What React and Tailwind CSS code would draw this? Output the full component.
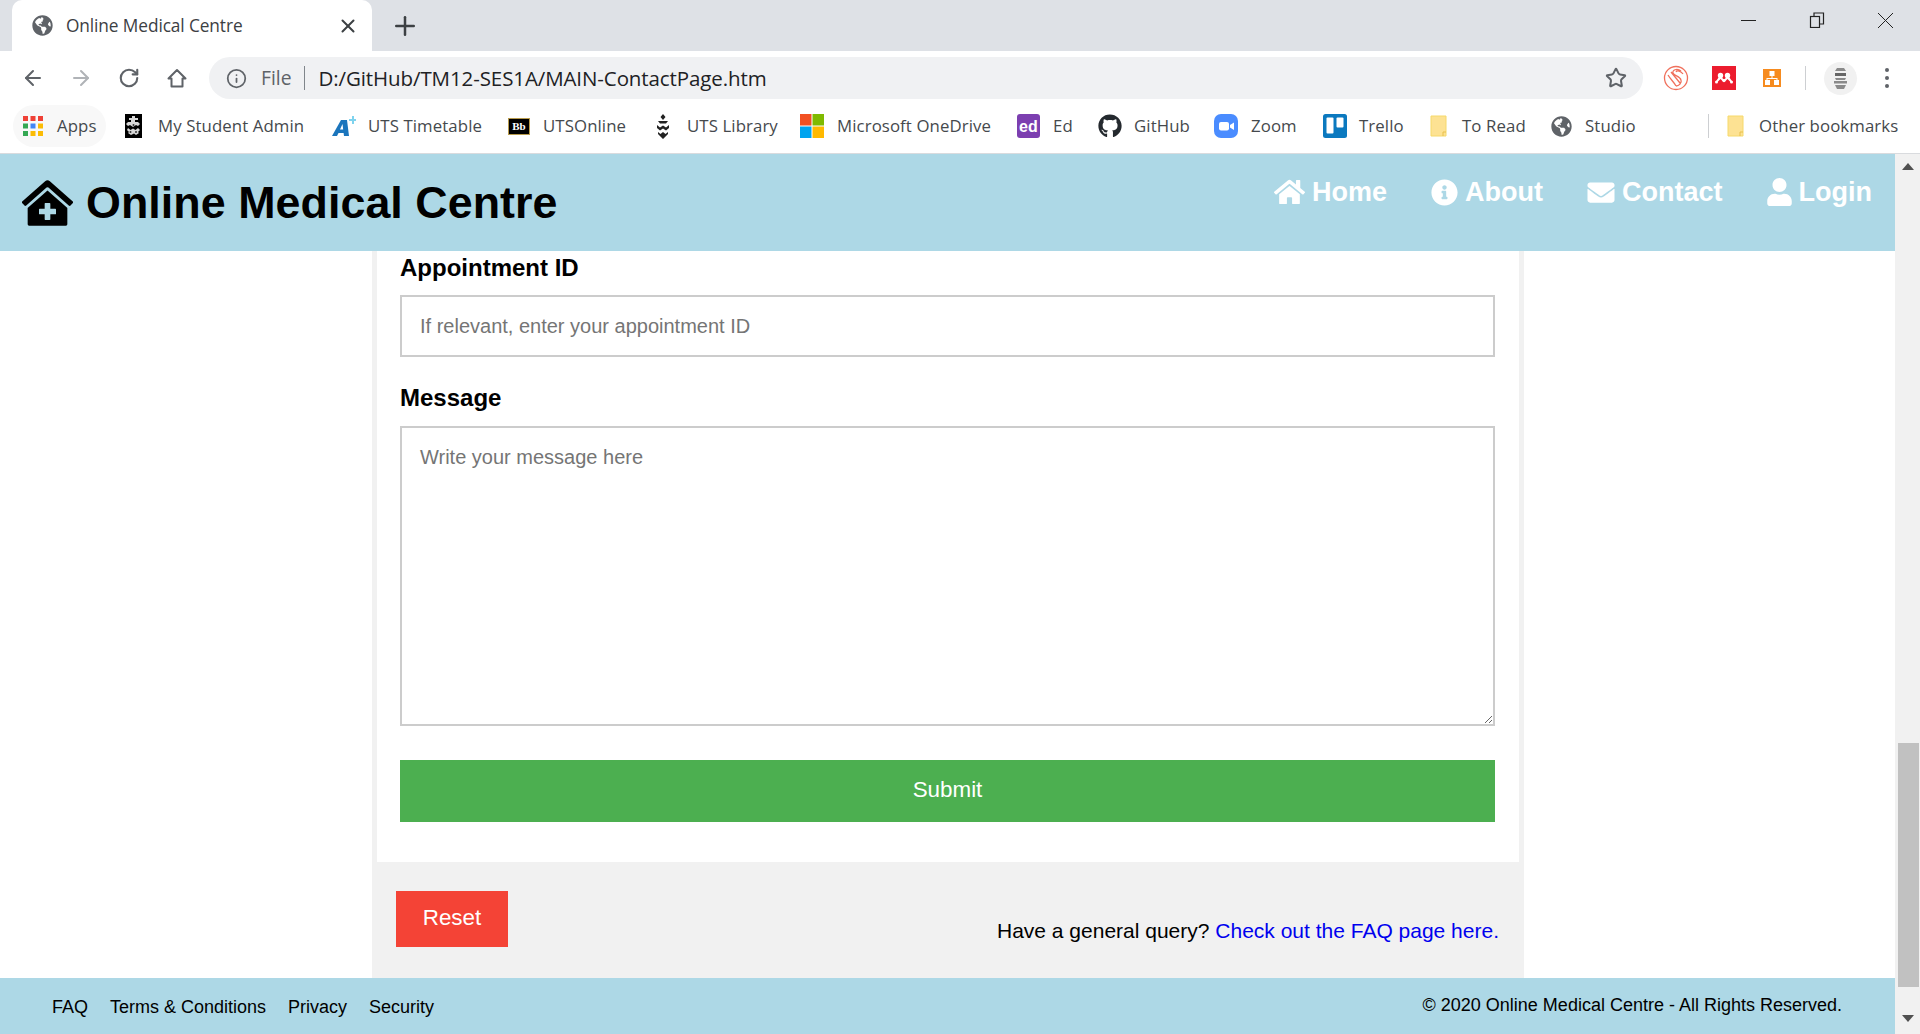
import React from "react";
import { FaHome, FaInfoCircle, FaEnvelope, FaUser, FaClinicMedical, FaGithub, FaGlobeAmericas } from "react-icons/fa";
import { ArrowLeft, ArrowRight, RotateCw, Info, Star, Plus, X } from "lucide-react";

const Folder = () => (
  <svg width="17" height="22" viewBox="0 0 17 22"><path d="M1 1h10l5 0v20H1z" fill="#fde293" stroke="#f6d96b" /><path d="M13 21v-4h3" fill="none" stroke="#e8c04c" /></svg>
);
const AppsIcon = () => (
  <svg width="20" height="20" viewBox="0 0 20 20">
    {[["#ef4136", 0, 0], ["#ef4136", 7.5, 0], ["#ef4136", 15, 0], ["#34a853", 0, 7.5], ["#4285f4", 7.5, 7.5], ["#fbbc05", 15, 7.5], ["#34a853", 0, 15], ["#fbbc05", 7.5, 15], ["#fbbc05", 15, 15]].map(([c, x, y], i) => (
      <rect key={i} x={x} y={y} width="5" height="5" fill={c} />
    ))}
  </svg>
);
const Crest = () => (
  <svg width="17" height="24" viewBox="0 0 17 24">
    <rect width="17" height="24" fill="#000" />
    <g fill="#d8d8d8">
      <path d="M7 2h3v2h3v2h-3v2h3l2 2-2 2-2-1-3 2-3-2-2 1-2-2 2-2h3V6H4V4h3z" />
      <path d="M3 14l2.500 2L8 14.500 10.500 16l2.500-2 2 2-2 2 1 1-3 2-2-1.500L6 21l-3-2 1-1-2-2z" />
    </g>
    <g fill="#333"><circle cx="5.500" cy="18" r="1" /><circle cx="11" cy="18" r="1" /><circle cx="8.500" cy="11" r="1" /></g>
  </svg>
);
const CrestLight = () => (
  <svg width="14" height="25" viewBox="0 0 14 25" fill="#222">
    <path d="M7 0l2.500 3L7 6 4.500 3zM2 7h10l-2 2.500h-6zM1 11l3 2.500 3-2 3 2 3-2.500v3l-3 2.500-3-2-3 2-3-2.500zM2 18l2.500 2 2.500-2 2.500 2 2.500-2v2l-5 5-5-5z" />
  </svg>
);
const APlus = () => (
  <svg width="24" height="22" viewBox="0 0 24 22">
    <path d="M0 21L9 5h6l2 16h-5l-.4-3H6.500L5 21zM8 14.500h3.200L10.500 9z" fill="#1b75bc" />
    <path d="M17 4h3V1h2v3h2v2h-2v3h-2V6h-3z" fill="#7fd3ee" />
  </svg>
);
const Bb = () => (
  <div className="w-[22px] h-[17px] bg-black border border-[#b89b4c] text-white text-[11px] leading-[15px] text-center font-['Liberation_Serif',serif] font-bold">Bb</div>
);
const MS = () => (
  <svg width="24" height="24" viewBox="0 0 24 24">
    <rect width="11.500" height="11.500" fill="#f25022" /><rect x="12.500" width="11.500" height="11.500" fill="#7fba00" />
    <rect y="12.500" width="11.500" height="11.500" fill="#00a4ef" /><rect x="12.500" y="12.500" width="11.500" height="11.500" fill="#ffb900" />
  </svg>
);
const Ed = () => (
  <div className="w-[23px] h-[24px] rounded-[3px] bg-[#7c3fb0] text-white text-[16px] leading-[25px] font-bold text-center font-['Liberation_Sans',sans-serif]">ed</div>
);
const Zoom = () => (
  <svg width="24" height="24" viewBox="0 0 24 24">
    <rect width="24" height="24" rx="7" fill="#4a8cff" />
    <rect x="5" y="8" width="10" height="8.500" rx="2" fill="#fff" />
    <path d="M16 11l4-2.500v7.500l-4-2.500z" fill="#fff" />
  </svg>
);
const Trello = () => (
  <svg width="24" height="24" viewBox="0 0 24 24">
    <rect width="24" height="24" rx="2.500" fill="#0b79bf" />
    <rect x="3.500" y="3.500" width="7" height="16" rx="1" fill="#fff" />
    <rect x="13.500" y="3.500" width="7" height="10" rx="1" fill="#fff" />
  </svg>
);
const Ext1 = () => (
  <svg width="26" height="26" viewBox="0 0 26 26" fill="none" stroke="#f0705c" strokeWidth="1.300">
    <circle cx="13" cy="13" r="11.500" />
    <path d="M18 6c-4-3-9-1-8 2 1 3 7 3 8 7 1 3-2 6-5 6M20 9c-2-3-6-4-7-2M5 10c3 5 6 7 8 11M8 7l9 11" />
  </svg>
);
const Mendeley = () => (
  <svg width="24" height="24" viewBox="0 0 24 24">
    <rect width="24" height="24" fill="#ec1c2e" />
    <g fill="#fff"><circle cx="8.500" cy="9.500" r="2.700" /><circle cx="15.500" cy="9.500" r="2.700" /><circle cx="12" cy="14.500" r="1.700" /><circle cx="4.500" cy="16" r="1.500" /><circle cx="19.500" cy="16" r="1.500" /><path d="M3.500 16l4-6h2l2 4h1l2-4h2l4 6h-2l-3-3-2 2h-3l-2-2-3 3z" /></g>
  </svg>
);
const Diagram = () => (
  <svg width="18" height="18" viewBox="0 0 18 18">
    <rect width="18" height="18" fill="#f68b1f" />
    <g fill="#fff"><rect x="6.500" y="2" width="5" height="5" /><rect x="2" y="11" width="5" height="5" /><rect x="11" y="11" width="5" height="5" /><path d="M8.500 7h1v2h5v2h-1v-1h-9v1h-1V9h5z" /></g>
  </svg>
);
const Avatar = () => (
  <div className="w-[33px] h-[33px] rounded-full bg-[#f1f1f1] flex items-center justify-center">
    <svg width="13" height="21" viewBox="0 0 13 21" fill="#8a8a8a">
      <path d="M3 0h7l2 3H1z" /><rect x="1" y="5" width="11" height="3" fill="#666" /><path d="M1 10h11l-1 2H2z" />
      <rect x="0" y="13" width="13" height="2.500" /><path d="M1 17h11l-2 4H3z" />
    </svg>
  </div>
);

function Mark({ icon, box, item, children }) {
  return (
    <div className={`flex items-center shrink-0 ${item}`}>
      <div className={`flex items-center shrink-0 ${box}`}>{icon}</div>
      <span className="whitespace-nowrap">{children}</span>
    </div>
  );
}

export default function App() {
  return (
    <div className="h-[1034px] w-[1920px] overflow-hidden flex flex-col bg-white font-['Open_Sans',sans-serif] text-[#3c4043]">
      {/* Tab strip */}
      <div className="h-[51px] shrink-0 bg-[#dee1e6] flex items-stretch pl-[12px]">
        <div className="w-[360px] bg-white rounded-t-[10px] flex items-center pl-[20px] pr-[13px]">
          <FaGlobeAmericas className="w-[21px] h-[21px] text-[#5f6368] shrink-0" />
          <span className="ml-[13px] text-[17.300px] tracking-[-0.1px] flex-1 whitespace-nowrap">Online Medical Centre</span>
          <X className="w-[22px] h-[22px] text-[#3c4043]" strokeWidth={2.200} />
        </div>
        <div className="ml-[18px] flex items-center"><Plus className="w-[30px] h-[30px] text-[#3c4043]" strokeWidth={2} /></div>
        <div className="ml-auto flex items-start pt-[12px] pr-[26px]">
          <div className="mt-[8px] w-[15px] h-[1px] bg-[#222]" />
          <svg className="ml-[53px]" width="16" height="16" viewBox="0 0 16 16" fill="none" stroke="#222" strokeWidth="1.200"><rect x="1.500" y="4.500" width="9" height="11" /><path d="M5 4V1h9.500v11H11" /></svg>
          <svg className="ml-[52px]" width="17" height="17" viewBox="0 0 17 17" stroke="#222" strokeWidth="1"><path d="M1 1l15 15M16 1L1 16" /></svg>
        </div>
      </div>

      {/* Toolbar */}
      <div className="h-[51px] shrink-0 bg-white flex items-center pt-[3px]">
        <ArrowLeft className="ml-[21px] w-[24px] h-[24px] text-[#5f6368]" strokeWidth={2} />
        <ArrowRight className="ml-[24px] w-[24px] h-[24px] text-[#b0b3b7]" strokeWidth={2} />
        <RotateCw className="ml-[25px] w-[22px] h-[22px] text-[#5f6368]" strokeWidth={2.300} />
        <svg className="ml-[26px]" width="22" height="22" viewBox="0 0 22 22" fill="none" stroke="#5f6368" strokeWidth="2"><path d="M11 3L2.500 11.500H5.500V19.500H16.500V11.500H19.500z" strokeLinejoin="round" /></svg>
        <div className="ml-[21px] w-[1434px] h-[42px] rounded-full bg-[#f0f1f3] flex items-center pl-[17px] pr-[17px]">
          <Info className="w-[21px] h-[21px] text-[#5f6368]" strokeWidth={2} />
          <span className="ml-[14px] text-[#5f6368] text-[19.300px]">File</span>
          <div className="ml-[12px] w-[1px] h-[24px] bg-[#80868b]" />
          <span className="ml-[14px] text-[#202124] text-[20.500px] tracking-[-0.1px] whitespace-nowrap">D:/GitHub/TM12-SES1A/MAIN-ContactPage.htm</span>
          <Star className="ml-auto mr-[-1px] w-[22px] h-[22px] text-[#5f6368]" strokeWidth={2.200} />
        </div>
        <div className="ml-[20px] w-[26px] flex justify-center"><Ext1 /></div>
        <div className="ml-[23px]"><Mendeley /></div>
        <div className="ml-[27px]"><Diagram /></div>
        <div className="ml-[24px] w-[1px] h-[24px] bg-[#cdcfd2]" />
        <div className="ml-[18px]"><Avatar /></div>
        <div className="ml-[28px] flex flex-col gap-[4px]">
          <span className="w-[4px] h-[4px] rounded-full bg-[#5f6368]" /><span className="w-[4px] h-[4px] rounded-full bg-[#5f6368]" /><span className="w-[4px] h-[4px] rounded-full bg-[#5f6368]" />
        </div>
      </div>

      {/* Bookmarks */}
      <div className="h-[52px] shrink-0 bg-white border-b border-[#d9dbde] flex items-center pl-[13px] pb-[3px] text-[16.800px] tracking-[0.1px] text-[#45494d]">
        <div className="w-[93px] h-[42px] mr-[19px] rounded-full bg-[#f8f8f8] flex items-center pl-[10px]">
          <AppsIcon /><span className="ml-[14px]">Apps</span>
        </div>
        <Mark item="w-[207px]" box="w-[33px]" icon={<Crest />}>My Student Admin</Mark>
        <Mark item="w-[176px]" box="w-[36px]" icon={<APlus />}>UTS Timetable</Mark>
        <Mark item="w-[148px]" box="w-[35px]" icon={<Bb />}>UTSOnline</Mark>
        <Mark item="w-[144px]" box="w-[31px]" icon={<CrestLight />}>UTS Library</Mark>
        <Mark item="w-[217px]" box="w-[37px]" icon={<MS />}>Microsoft OneDrive</Mark>
        <Mark item="w-[81px]" box="w-[36px]" icon={<Ed />}>Ed</Mark>
        <Mark item="w-[116px]" box="w-[36px]" icon={<FaGithub className="w-[24px] h-[24px] text-[#24292e]" />}>GitHub</Mark>
        <Mark item="w-[109px]" box="w-[37px]" icon={<Zoom />}>Zoom</Mark>
        <Mark item="w-[107px]" box="w-[36px]" icon={<Trello />}>Trello</Mark>
        <Mark item="w-[121px]" box="w-[32px]" icon={<Folder />}>To Read</Mark>
        <Mark item="w-[157px]" box="w-[34px]" icon={<FaGlobeAmericas className="w-[21px] h-[21px] text-[#5f6368]" />}>Studio</Mark>
        <div className="w-[1px] h-[24px] bg-[#cdcfd2] mr-[18px]" />
        <Mark item="" box="w-[32px]" icon={<Folder />}>Other bookmarks</Mark>
      </div>

      {/* Page */}
      <div className="flex-1 min-h-0 flex font-['Liberation_Sans',sans-serif] text-black">
        <div className="w-[1895px] flex flex-col">
          <header className="h-[97px] shrink-0 bg-[#add8e6] flex items-start justify-between pl-[22px] pr-[23px]">
            <div className="flex items-center h-[97px]">
              <FaClinicMedical className="w-[51px] h-[46px] text-black" />
              <span className="ml-[13px] text-[44.800px] tracking-[0.05px] leading-none font-bold whitespace-nowrap">Online Medical Centre</span>
            </div>
            <nav className="flex items-center h-[76px] text-white text-[27px] font-bold">
              <FaHome className="w-[31px] h-[28px]" /><span className="ml-[7px]">Home</span>
              <FaInfoCircle className="ml-[44px] w-[27px] h-[27px]" /><span className="ml-[7px]">About</span>
              <FaEnvelope className="ml-[44px] w-[28px] h-[27px]" /><span className="ml-[7px]">Contact</span>
              <FaUser className="ml-[44px] w-[25px] h-[28px]" /><span className="ml-[7px]">Login</span>
            </nav>
          </header>

          <main className="flex-1 min-h-0 flex justify-start pl-[372px]">
            <div className="w-[1152px] bg-[#f1f1f1] flex flex-col">
              <form className="mx-[5px] h-[611px] shrink-0 bg-white pl-[23px] pr-[24px] flex flex-col">
                <label className="mt-[3px] h-[28px] leading-[28px] text-[24px] font-bold">Appointment ID</label>
                <input
                  placeholder="If relevant, enter your appointment ID"
                  className="mt-[13px] h-[62px] shrink-0 w-full border-2 border-[#ccc] bg-white px-[18px] text-[20px] outline-none placeholder:text-[#757575]"
                />
                <label className="mt-[27px] h-[28px] leading-[28px] text-[24px] font-bold">Message</label>
                <textarea
                  placeholder="Write your message here"
                  className="mt-[14px] h-[300px] shrink-0 w-full border-2 border-[#ccc] bg-white px-[18px] py-[14px] text-[20px] outline-none placeholder:text-[#757575]"
                />
                <button type="button" className="mt-[34px] h-[62px] pb-[3px] shrink-0 w-full bg-[#4caf50] text-white text-[22.400px]">Submit</button>
              </form>
              <div className="flex-1 flex items-start pl-[24px] pr-[25px]">
                <button type="button" className="mt-[29px] w-[112px] h-[56px] pb-[2px] bg-[#f44336] text-white text-[22.400px]">Reset</button>
                <p className="ml-auto mt-[56px] text-[21px] leading-[26px] whitespace-nowrap">
                  Have a general query? <a href="#faq" className="text-[#0000ee]">Check out the FAQ page here.</a>
                </p>
              </div>
            </div>
          </main>

          <footer className="h-[56px] shrink-0 bg-[#add8e6] flex items-start text-[18px] pl-[52px] pr-[53px]">
            <a className="mt-[18px] leading-[22px]">FAQ</a>
            <a className="mt-[18px] ml-[22px] leading-[22px]">Terms &amp; Conditions</a>
            <a className="mt-[18px] ml-[22px] leading-[22px]">Privacy</a>
            <a className="mt-[18px] ml-[22px] leading-[22px]">Security</a>
            <span className="ml-auto mt-[16px] leading-[22px]">© 2020 Online Medical Centre - All Rights Reserved.</span>
          </footer>
        </div>

        {/* Scrollbar */}
        <div className="w-[25px] bg-[#f1f1f1] flex flex-col items-center pl-[1px]">
          <div className="mt-[9px] w-0 h-0 border-x-[6px] border-x-transparent border-b-[7px] border-b-[#505050]" />
          <div className="mt-[573px] w-[21px] h-[244px] bg-[#c1c1c1]" />
          <div className="mt-[28px] w-0 h-0 border-x-[6px] border-x-transparent border-t-[7px] border-t-[#505050]" />
        </div>
      </div>
    </div>
  );
}
